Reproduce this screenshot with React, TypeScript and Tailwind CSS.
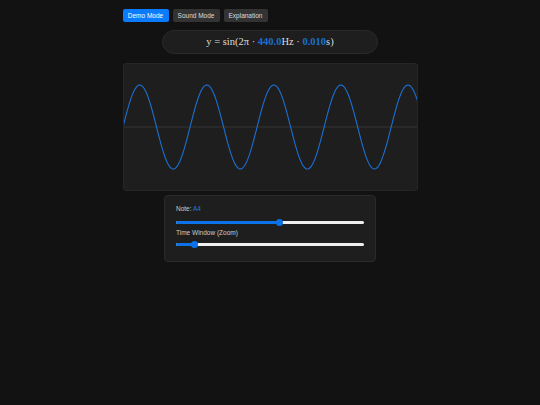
import React from "react";

const W = 295;
const H = 128;

function wavePath() {
  const cycles = 440 * 0.01;
  const pts: string[] = [];
  for (let x = 0; x <= W; x += 1) {
    const y = H / 2 - 42 * Math.sin((2 * Math.PI * cycles * x) / W);
    pts.push(`${x === 0 ? "M" : "L"}${x},${y.toFixed(2)}`);
  }
  return pts.join(" ");
}

function Slider({ value }: { value: number }) {
  return (
    <div className="relative h-[7px] flex items-center">
      <div className="h-[3px] w-full rounded-full bg-[#efefef] overflow-hidden">
        <div className="h-full bg-[#0b72e7]" style={{ width: `${value * 100}%` }} />
      </div>
      <div
        className="absolute top-0 h-[7px] w-[7px] -ml-[3.5px] rounded-full bg-[#0b72e7]"
        style={{ left: `${value * 100}%` }}
      />
    </div>
  );
}

export default function App() {
  return (
    <div className="min-h-[405px] bg-[#121212] font-['Liberation_Sans',Arial,sans-serif] text-[#ddd]">
      <div className="mx-auto w-[295px] pt-[9px] flex flex-col items-center">
        <div className="flex w-full gap-[4px]">
          <button className="h-[13px] w-[46px] rounded-[2px] bg-[#0a7bfa] text-[6.5px] text-white">Demo Mode</button>
          <button className="h-[13px] w-[47px] rounded-[2px] bg-[#333] text-[6.5px] text-[#ddd]">Sound Mode</button>
          <button className="h-[13px] w-[44px] rounded-[2px] bg-[#333] text-[6.5px] text-[#ddd]">Explanation</button>
        </div>

        <div className="mt-[8px] h-[24px] w-[216px] rounded-full bg-[#1e1e1e] border border-[#2a2a2a] flex items-center justify-center font-['Liberation_Serif','Times_New_Roman',serif] text-[10.5px] text-[#dcdcdc]">
          <span>
            y = sin(2π · <span className="font-bold text-[#1a6fd6]">440.0</span>Hz · <span className="font-bold text-[#1a6fd6]">0.010</span>s)
          </span>
        </div>

        <div className="mt-[9px] h-[128px] w-[295px] rounded-[3px] bg-[#1e1e1e] border border-[#262626] overflow-hidden">
          <svg width={W} height={H} viewBox={`0 0 ${W} ${H}`} className="block -m-px">
            <line x1={0} y1={H / 2} x2={W} y2={H / 2} stroke="#3a3a3a" strokeWidth={0.8} />
            <path d={wavePath()} fill="none" stroke="#1c6fd1" strokeWidth={1.1} />
          </svg>
        </div>

        <div className="mt-[4px] w-[212px] rounded-[4px] bg-[#1e1e1e] border border-[#2a2a2a] px-[11px] pt-[9px] pb-[13.5px] text-[6.5px] leading-[8px]">
          <div className="text-[#ccc]">
            Note: <span className="text-[#1f78e0]">A4</span>
          </div>
          <div className="mt-[5.5px]">
            <Slider value={0.548} />
          </div>
          <div className="mt-[3.5px] text-[#ccc]">Time Window (Zoom)</div>
          <div className="mt-[3.5px]">
            <Slider value={0.1} />
          </div>
        </div>
      </div>
    </div>
  );
}
